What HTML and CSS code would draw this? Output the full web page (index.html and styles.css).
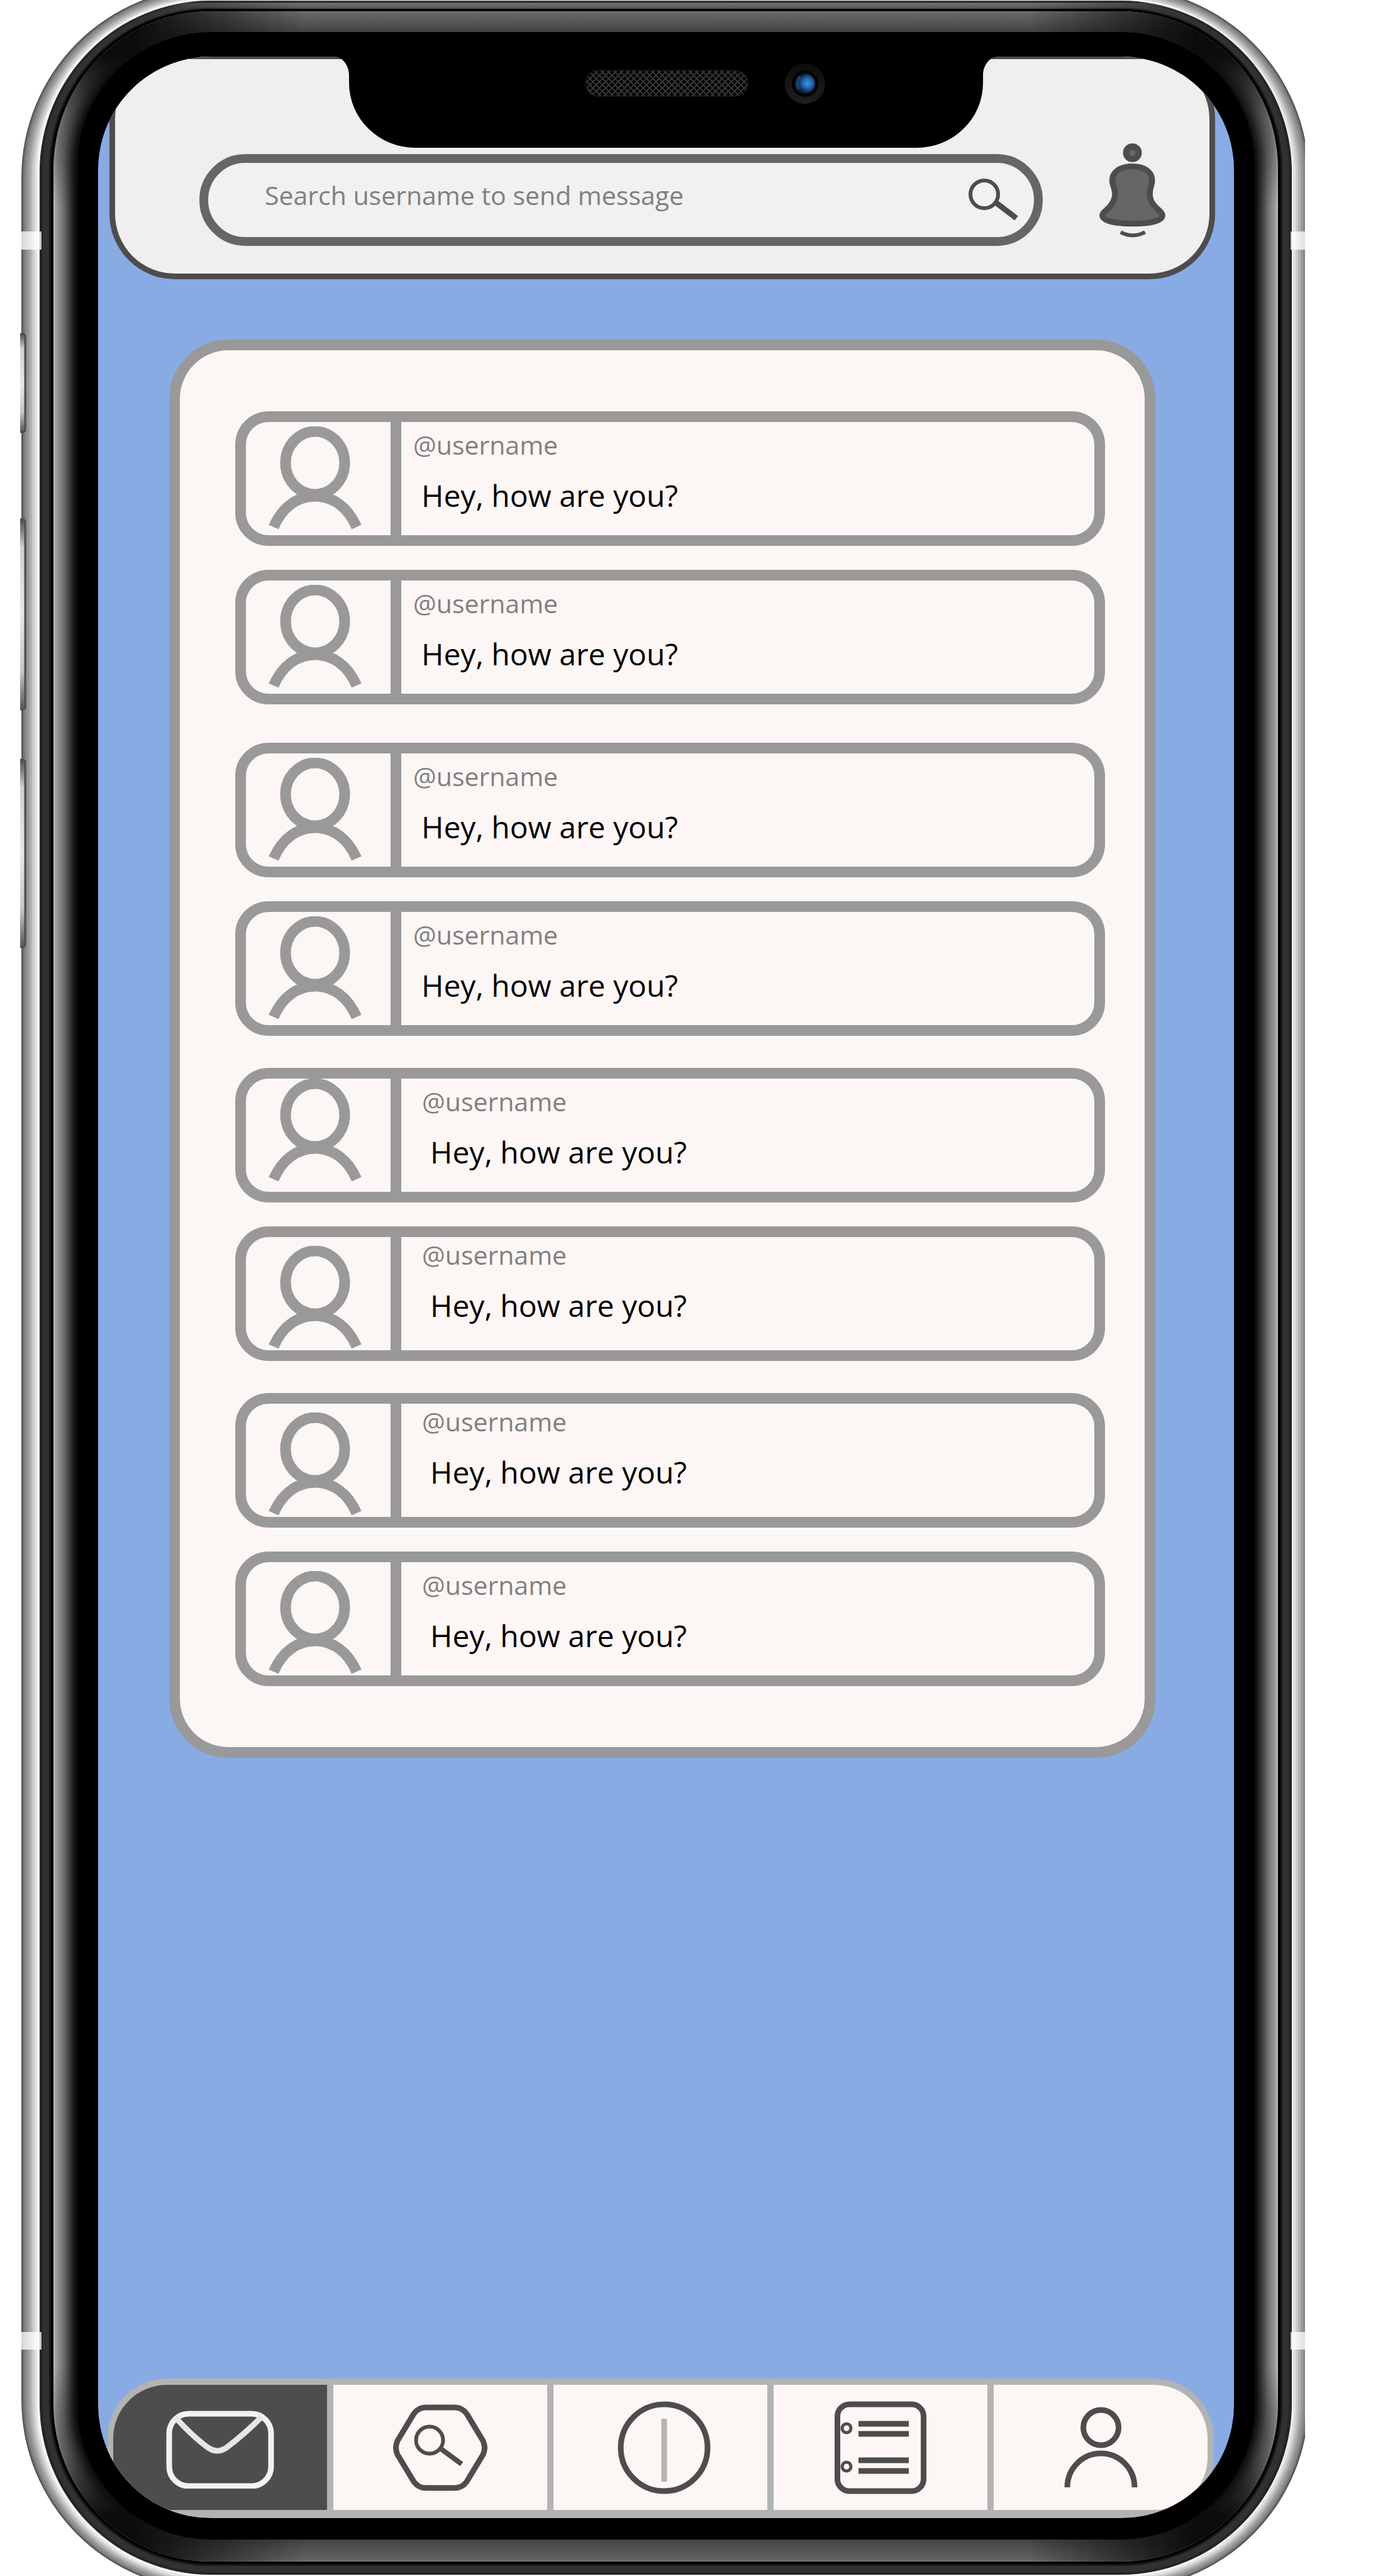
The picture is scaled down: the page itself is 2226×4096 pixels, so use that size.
FILE: index.html
```html
<!DOCTYPE html>
<html lang="en">
<head>
<meta charset="utf-8">
<meta name="viewport" content="width=device-width, initial-scale=1">
<title>Messages</title>
<link rel="stylesheet" href="styles.css">
</head>
<body>
<svg class="defs" aria-hidden="true">
  <symbol id="avatar" viewBox="0 0 150 166">
    <ellipse cx="75" cy="58" rx="47" ry="50" fill="none" stroke="#999" stroke-width="17"/>
    <path d="M9 160C23 128 47 111 75 111S127 128 141 160" fill="none" stroke="#999" stroke-width="17"/>
  </symbol>
</svg>

<div class="phone">
  <svg class="frame" viewBox="0 0 2044 4096" preserveAspectRatio="none" aria-hidden="true">
    <defs>
      <clipPath id="glass"><path clip-rule="evenodd" d="M303 18H1751A250 250 0 0 1 2001 268V3823A250 250 0 0 1 1751 4073H303A250 250 0 0 1 53 3823V268A250 250 0 0 1 303 18ZM303 51H1752A212 212 0 0 1 1964 263V3826A212 212 0 0 1 1752 4038H303A212 212 0 0 1 91 3826V263A212 212 0 0 1 303 51Z"/></clipPath>
      <clipPath id="rim"><path clip-rule="evenodd" d="M303 1H1751A272 272 0 0 1 2023 273V3822A272 272 0 0 1 1751 4094H303A272 272 0 0 1 31 3822V273A272 272 0 0 1 303 1ZM303 14H1751A254 254 0 0 1 2005 268V3823A254 254 0 0 1 1751 4077H303A254 254 0 0 1 49 3823V268A254 254 0 0 1 303 14Z"/></clipPath>
      <linearGradient id="fadeTop" x1="0" y1="90" x2="0" y2="330" gradientUnits="userSpaceOnUse"><stop offset="0" stop-color="#0c0c0c"/><stop offset=".4" stop-color="#0c0c0c" stop-opacity=".45"/><stop offset="1" stop-color="#0c0c0c" stop-opacity="0"/></linearGradient>
      <linearGradient id="fadeBottom" x1="0" y1="4000" x2="0" y2="3760" gradientUnits="userSpaceOnUse"><stop offset="0" stop-color="#0c0c0c"/><stop offset=".4" stop-color="#0c0c0c" stop-opacity=".45"/><stop offset="1" stop-color="#0c0c0c" stop-opacity="0"/></linearGradient>
      <linearGradient id="bandTop" x1="0" y1="18" x2="0" y2="51" gradientUnits="userSpaceOnUse"><stop offset="0" stop-color="#828282"/><stop offset=".06" stop-color="#686868"/><stop offset="1" stop-color="#424242"/></linearGradient>
      <linearGradient id="bandBottom" x1="0" y1="4038" x2="0" y2="4073" gradientUnits="userSpaceOnUse"><stop offset="0" stop-color="#424242"/><stop offset=".94" stop-color="#646464"/><stop offset="1" stop-color="#828282"/></linearGradient>
      <linearGradient id="rimTop" x1="0" y1="1" x2="0" y2="14" gradientUnits="userSpaceOnUse"><stop offset="0" stop-color="#3a3a3a"/><stop offset=".2" stop-color="#2a2a2a"/><stop offset=".35" stop-color="#747474"/><stop offset="1" stop-color="#505050"/></linearGradient>
      <linearGradient id="sideFade" x1="180" y1="0" x2="1874" y2="0" gradientUnits="userSpaceOnUse"><stop offset="0" stop-color="#fff" stop-opacity="0"/><stop offset=".16" stop-color="#fff"/><stop offset=".84" stop-color="#fff"/><stop offset="1" stop-color="#fff" stop-opacity="0"/></linearGradient>
      <mask id="middle" maskUnits="userSpaceOnUse" x="0" y="0" width="2044" height="4096"><rect width="2044" height="4096" fill="url(#sideFade)"/></mask>
      <linearGradient id="key" x1="0" y1="0" x2="0" y2="1"><stop offset="0" stop-color="#505050"/><stop offset=".15" stop-color="#cfd1d1"/><stop offset=".5" stop-color="#e6e9e8"/><stop offset=".8" stop-color="#c4c6c5"/><stop offset="1" stop-color="#555858"/></linearGradient>
    </defs>
    <rect x="2" y="-20" width="2048" height="4138" rx="302" fill="#505252"/>
    <rect x="4" y="-18" width="2044" height="4134" rx="300" fill="#707272"/>
    <rect x="7" y="-16" width="2038" height="4130" rx="297" fill="#868a88"/>
    <rect x="11" y="-13" width="2030" height="4124" rx="293" fill="#9a9a9a"/>
    <rect x="15" y="-10" width="2022" height="4118" rx="289" fill="#b2b2b2"/>
    <rect x="19" y="-7" width="2014" height="4112" rx="285" fill="#cacaca"/>
    <rect x="23" y="-4" width="2006" height="4106" rx="281" fill="#e2e2e2"/>
    <rect x="27" y="-2" width="1998" height="4100" rx="276" fill="#f8f8f8"/>
    <rect x="31" y="1" width="1992" height="4093" rx="272" fill="#242524"/>
    <rect x="36" y="4" width="1982" height="4086" rx="267" fill="#323130"/>
    <rect x="46" y="12" width="1962" height="4068" rx="257" fill="#181818"/>
    <rect x="49" y="14" width="1956" height="4063" rx="254" fill="#000"/>
    <rect x="53" y="18" width="1948" height="4055" rx="250" fill="#b4b4b4"/>
    <rect x="56" y="21" width="1942" height="4049" rx="247" fill="#9c9c9c"/>
    <rect x="59" y="24" width="1936" height="4043" rx="244" fill="#929292"/>
    <rect x="62" y="27" width="1930" height="4037" rx="241" fill="#868686"/>
    <rect x="65" y="30" width="1924" height="4031" rx="238" fill="#7a7a7a"/>
    <rect x="68" y="33" width="1918" height="4025" rx="235" fill="#6c6c6c"/>
    <rect x="71" y="36" width="1912" height="4019" rx="232" fill="#5c5c5c"/>
    <rect x="74" y="39" width="1906" height="4013" rx="229" fill="#4c4c4c"/>
    <rect x="77" y="42" width="1900" height="4007" rx="226" fill="#3c3c3c"/>
    <rect x="80" y="45" width="1894" height="4001" rx="223" fill="#2c2c2c"/>
    <rect x="83" y="48" width="1888" height="3995" rx="220" fill="#1e1e1e"/>
    <rect x="86" y="50" width="1882" height="3990" rx="217" fill="#101010"/>
    <rect x="91" y="51" width="1873" height="3987" rx="212" fill="#000"/>
    <g clip-path="url(#glass)">
      <rect width="2044" height="340" fill="url(#fadeTop)"/>
      <rect y="3750" width="2044" height="346" fill="url(#fadeBottom)"/>
      <g mask="url(#middle)">
        <rect width="2044" height="90" fill="url(#bandTop)"/>
        <rect y="4000" width="2044" height="96" fill="url(#bandBottom)"/>
      </g>
    </g>
    <g clip-path="url(#rim)" mask="url(#middle)"><rect width="2044" height="60" fill="url(#rimTop)"/></g>
    <g fill="#fff" opacity=".75">
      <rect x="2" y="368" width="32" height="29"/><rect x="2021" y="368" width="23" height="29"/>
      <rect x="2" y="3708" width="32" height="28"/><rect x="2021" y="3708" width="23" height="28"/>
    </g>
    <g fill="url(#key)" stroke="#4c4f4f" stroke-width="3">
      <rect x="-8" y="531" width="16" height="156" rx="4"/>
      <rect x="-8" y="826" width="16" height="302" rx="4"/>
      <rect x="-8" y="1208" width="16" height="298" rx="4"/>
    </g>
  </svg>

  <div class="screen">
    <header class="topbar">
      <form class="search" role="search">
        <input class="search-field" type="text" aria-label="Search username to send message" placeholder="Search username to send message">
        <button class="icon-button" type="submit" aria-label="Search">
          <svg width="80" height="68" viewBox="0 0 80 68"><g fill="none" stroke="#4d4d4d"><circle cx="25" cy="25" r="22" stroke-width="6"/><path d="M42 37L76 63" stroke-width="9"/></g></svg>
        </button>
      </form>
      <button class="icon-button bell" type="button" aria-label="Notifications">
        <svg width="105" height="150" viewBox="0 0 140 201">
          <circle cx="70" cy="20" r="13.500" fill="#666" stroke="#4d4d4d" stroke-width="13"/>
          <path d="M70 49C44 49 27 61 27 79C27 89 33 94 33 108C33 120 28 128 20 137C12 145 6 148 6 154C8 166 36 171 72 171S132 166 134 154C134 148 128 144 122 138C112 128 107 120 107 108C107 94 112 89 112 79C112 61 96 49 70 49Z" fill="#666" stroke="#4d4d4d" stroke-width="12.500"/>
          <path d="M45 189Q70 203 97 189" fill="none" stroke="#4d4d4d" stroke-width="8"/>
        </svg>
      </button>
    </header>

    <svg class="notch" width="1052" height="145" viewBox="0 0 1052 145" aria-hidden="true">
      <defs>
        <pattern id="mesh" width="10" height="10" patternUnits="userSpaceOnUse"><path d="M-1 -1L11 11M-1 11L11 -1" stroke="#383838" stroke-width="2"/></pattern>
        <radialGradient id="lens" cx=".62" cy=".48" r=".5"><stop offset="0" stop-color="#3a94ea"/><stop offset=".5" stop-color="#2463a8"/><stop offset="1" stop-color="#0c1a36"/></radialGradient>
        <linearGradient id="ring" x1="0" y1="0" x2="0" y2="1"><stop offset="0" stop-color="#0c0c0c"/><stop offset="1" stop-color="#1e1e1e"/></linearGradient>
      </defs>
      <path d="M0 0C14 2 22 16 22 30V42A106 103 0 0 0 128 145H924A106 103 0 0 0 1030 42V30C1030 16 1038 2 1052 0Z"/>
      <rect x="398" y="22" width="258" height="41" rx="20" fill="url(#mesh)" stroke="#161616" stroke-width="2"/>
      <circle cx="747" cy="43" r="32" fill="url(#ring)"/>
      <circle cx="747" cy="43" r="21" fill="#030303"/>
      <circle cx="747" cy="43" r="16" fill="url(#lens)"/>
      <path d="M739 32Q732 42 737 52" fill="none" stroke="#1d416e" stroke-width="5"/>
    </svg>

    <main class="panel">
      <ul class="threads">
        <li class="thread">
          <div class="portrait"><svg width="150" height="166"><use href="#avatar"/></svg></div>
          <div class="summary"><h2 class="username">@username</h2><p class="message">Hey, how are you?</p></div>
        </li>
        <li class="thread">
          <div class="portrait"><svg width="150" height="166"><use href="#avatar"/></svg></div>
          <div class="summary"><h2 class="username">@username</h2><p class="message">Hey, how are you?</p></div>
        </li>
      </ul>
      <ul class="threads">
        <li class="thread">
          <div class="portrait"><svg width="150" height="166"><use href="#avatar"/></svg></div>
          <div class="summary"><h2 class="username">@username</h2><p class="message">Hey, how are you?</p></div>
        </li>
        <li class="thread">
          <div class="portrait"><svg width="150" height="166"><use href="#avatar"/></svg></div>
          <div class="summary"><h2 class="username">@username</h2><p class="message">Hey, how are you?</p></div>
        </li>
      </ul>
      <ul class="threads threads-inset">
        <li class="thread">
          <div class="portrait portrait-high"><svg width="150" height="166"><use href="#avatar"/></svg></div>
          <div class="summary"><h2 class="username">@username</h2><p class="message">Hey, how are you?</p></div>
        </li>
        <li class="thread">
          <div class="portrait portrait-low"><svg width="150" height="166"><use href="#avatar"/></svg></div>
          <div class="summary summary-high"><h2 class="username">@username</h2><p class="message">Hey, how are you?</p></div>
        </li>
      </ul>
      <ul class="threads threads-inset">
        <li class="thread">
          <div class="portrait portrait-low"><svg width="150" height="166"><use href="#avatar"/></svg></div>
          <div class="summary summary-high"><h2 class="username">@username</h2><p class="message">Hey, how are you?</p></div>
        </li>
        <li class="thread">
          <div class="portrait portrait-low"><svg width="150" height="166"><use href="#avatar"/></svg></div>
          <div class="summary"><h2 class="username">@username</h2><p class="message">Hey, how are you?</p></div>
        </li>
      </ul>
    </main>

    <nav class="tabs" aria-label="Main">
      <a class="tab tab-active" href="#messages" aria-label="Messages" aria-current="page">
        <svg width="172" height="130" viewBox="0 0 172 130"><g fill="none" stroke-width="9"><rect x="5" y="11" width="162" height="115" rx="31" stroke="#f2f2f2"/><path d="M14 16C36 40 50 53 67 65Q81 75 96 65C112 53 130 38 152 16" stroke="#e6e6e6"/></g></svg>
      </a>
      <a class="tab" href="#explore" aria-label="Explore">
        <svg width="150" height="138" viewBox="0 0 150 138"><g fill="none" stroke="#4d4d4d"><path d="M52 5H98Q110 5 117 15L143 58Q148 69 143 80L117 123Q110 133 98 133H52Q40 133 33 123L7 80Q2 69 7 58L33 15Q40 5 52 5Z" stroke-width="9"/><circle cx="58" cy="57" r="21.500" stroke-width="6"/><path d="M75 70L109 95" stroke-width="8"/></g></svg>
      </a>
      <a class="tab" href="#home" aria-label="Home">
        <svg width="160" height="148" viewBox="0 0 160 148"><circle cx="86" cy="74" r="69" fill="none" stroke="#4d4d4d" stroke-width="9"/><path d="M86 28V128" stroke="#b3b3b3" stroke-width="9"/></svg>
      </a>
      <a class="tab" href="#lists" aria-label="Lists">
        <svg width="146" height="148" viewBox="0 0 146 148"><g fill="none" stroke="#4d4d4d" stroke-width="9"><rect x="4.500" y="5" width="137" height="138" rx="19"/><path d="M38 36H118M38 52H118M38 94H118M38 111H118"/><g stroke-width="5"><circle cx="19" cy="43" r="7"/><circle cx="19" cy="104" r="7"/></g></g></svg>
      </a>
      <a class="tab" href="#profile" aria-label="Profile">
        <svg width="117" height="129" viewBox="0 0 117 129"><g fill="none" stroke="#4d4d4d" stroke-width="9"><circle cx="58.500" cy="33" r="28"/><path d="M5 128A53.500 54 0 0 1 112 128"/></g></svg>
      </a>
    </nav>
  </div>
</div>
</body>
</html>
```
FILE: styles.css
```css
* {
  box-sizing: border-box;
}

body {
  margin: 0;
  background: #fff;
  font-family: "Open Sans", "Noto Sans", sans-serif;
  color: #000;
}

.defs {
  position: absolute;
  width: 0;
  height: 0;
}

/* Device */
.phone {
  position: relative;
  display: flex;
  flex-direction: column;
  min-height: 100vh;
  margin: 0 151px 0 32px;
  padding: 90px 113px 92px 124px;
  overflow: hidden;
}

.frame {
  position: absolute;
  inset: 0;
  width: 100%;
  height: 100%;
}

.screen {
  position: relative;
  flex: 1;
  display: flex;
  flex-direction: column;
  border-radius: 180px;
  background: #89abe3;
  overflow: hidden;
}

.notch {
  position: absolute;
  top: 0;
  left: 0;
  right: 0;
  margin: 0 auto;
}

/* Header */
.topbar {
  display: flex;
  align-items: flex-start;
  gap: 90px;
  margin: -5px 30px 0 18px;
  padding: 134px 70px 44px 134px;
  border: 9px solid #4d4d4d;
  border-radius: 104px;
  background: #efefef;
}

.search {
  flex: 1;
  display: flex;
  align-items: center;
  height: 146px;
  margin-top: 17px;
  padding: 0 24px 0 90px;
  border: 14px solid #666;
  border-radius: 73px;
  background: #f1f1f1;
}

.search-field {
  flex: 1;
  min-width: 0;
  padding: 0 0 16px;
  border: 0;
  outline: 0;
  background: transparent;
  font: inherit;
  font-size: 41px;
  line-height: 56px;
  color: #808080;
}

.search-field::placeholder {
  color: #808080;
  opacity: 1;
}

.icon-button {
  display: block;
  padding: 0;
  border: 0;
  background: none;
}

.icon-button svg {
  display: block;
}

/* Conversations */
.panel {
  display: flex;
  flex-direction: column;
  gap: 51px;
  margin: 96px 125px 0 113px;
  padding: 97px 63px 97px 88px;
  border: 17px solid #999;
  border-radius: 94px;
  background: #fcf7f5;
}

.threads {
  display: flex;
  flex-direction: column;
  gap: 38px;
  margin: 0;
  padding: 0;
  list-style: none;
}

.threads:first-child {
  margin-bottom: 10px;
}

.thread {
  display: flex;
  height: 214px;
  border: 17px solid #999;
  border-radius: 53px;
}

.portrait {
  display: flex;
  flex: none;
  align-items: center;
  justify-content: center;
  width: 247px;
  padding-right: 10px;
  border-right: 17px solid #999;
}

.portrait-high {
  align-items: flex-start;
}

.portrait-low {
  align-items: flex-end;
}

.summary {
  flex: 1;
  padding: 8px 19px;
}

.threads-inset .summary {
  padding-left: 33px;
}

.summary-high {
  padding-top: 0;
}

.username,
.message {
  margin: 0;
  font-weight: 400;
}

.username {
  font-size: 41px;
  line-height: 56px;
  color: #808080;
}

.message {
  margin-top: 20px;
  padding-left: 13px;
  font-size: 48px;
  line-height: 66px;
}

/* Tab bar */
.tabs {
  display: grid;
  grid-template-columns: repeat(5, 1fr);
  gap: 10px;
  margin: auto 32px 1px 15px;
  border: solid #b3b3b3;
  border-width: 10px 10px 12px 9px;
  border-radius: 95px;
  background: #b3b3b3;
  overflow: hidden;
}

.tab {
  display: flex;
  align-items: center;
  justify-content: center;
  height: 199px;
  background: #fcf7f5;
}

.tab-active {
  background: #4d4d4d;
}
```
